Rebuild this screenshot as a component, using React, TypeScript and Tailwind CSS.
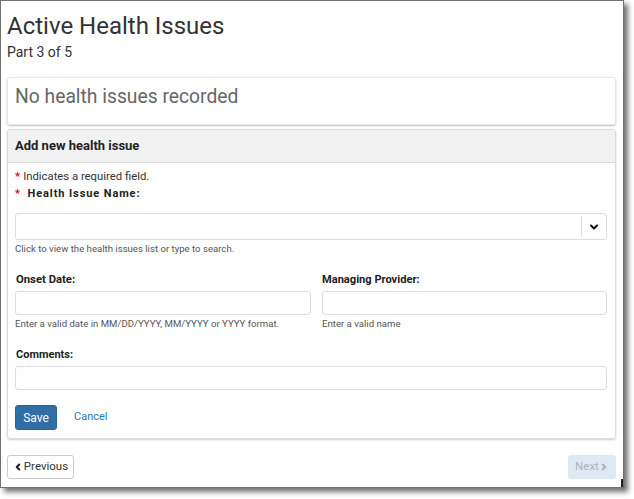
import { ChevronDown, ChevronLeft, ChevronRight } from "lucide-react"

const font = { fontFamily: "Roboto, 'Liberation Sans', sans-serif" }

function Req() {
  return <span className="text-[#d0021b] font-bold mr-[3px]">*</span>
}

export default function App() {
  return (
    <div style={font} className="w-[634px] h-[499px] bg-white">
      <div className="relative w-[624px] h-[488px] border border-[#707070] bg-white shadow-[4px_4px_5px_rgba(0,0,0,0.55)] pl-[6px] pr-[7px] pt-[12px] text-[#333]">
        <h1 className="text-[24px] leading-[26px] font-normal">Active Health Issues</h1>
        <div className="text-[14px] leading-[20px] mt-[3px]">Part 3 of 5</div>

        <div className="mt-[15px] h-[48px] border border-[#e6e6e6] rounded-[3px] shadow-[0_1px_2px_rgba(0,0,0,0.25)] px-[7px] pt-[5px]">
          <div className="text-[19.3px] leading-[28px] text-[#666]">No health issues recorded</div>
        </div>

        <div className="mt-[4px] border border-[#dcdcdc] rounded-[3px] shadow-[0_1px_2px_rgba(0,0,0,0.2)]">
          <div className="h-[33px] bg-[#f2f2f2] border-b border-[#dcdcdc] px-[7px] pt-[7px] text-[13px] leading-[18px] font-bold text-[#222]">
            Add new health issue
          </div>
          <div className="pl-[7px] pr-[8px] pt-[6px] pb-[8px]">
            <div className="text-[11.3px] leading-[16px] text-[#333]">
              <Req />Indicates a required field.
            </div>
            <div className="mt-[1px] text-[11px] leading-[16px] font-bold text-[#222] tracking-[0.9px]">
              <Req /> Health Issue Name:
            </div>
            <div className="mt-[11px] h-[27px] border border-[#dedede] rounded-[3px] flex">
              <div className="flex-1" />
              <div className="w-[25px] flex items-center justify-center border-l border-[#dedede] my-[2px]">
                <ChevronDown size={12} strokeWidth={4} className="text-[#111]" />
              </div>
            </div>
            <div className="mt-[2px] text-[9.6px] leading-[14px] text-[#555]">
              Click to view the health issues list or type to search.
            </div>

            <div className="mt-[16px] grid grid-cols-[296px_1fr] gap-x-[11px]">
              <div>
                <div className="text-[11.3px] leading-[16px] font-bold text-[#222] pl-[1px]">Onset Date:</div>
                <div className="mt-[3px] h-[24px] border border-[#dedede] rounded-[3px]" />
                <div className="mt-[2px] text-[9.6px] leading-[14px] text-[#555]">
                  Enter a valid date in MM/DD/YYYY, MM/YYYY or YYYY format.
                </div>
              </div>
              <div>
                <div className="text-[11.1px] leading-[16px] font-bold text-[#222]">Managing Provider:</div>
                <div className="mt-[3px] h-[24px] border border-[#dedede] rounded-[3px]" />
                <div className="mt-[2px] text-[9.6px] leading-[14px] text-[#555]">Enter a valid name</div>
              </div>
            </div>

            <div className="mt-[16px] text-[11px] leading-[16px] font-bold text-[#222] pl-[1px]">Comments:</div>
            <div className="mt-[3px] h-[24px] border border-[#dedede] rounded-[3px]" />

            <div className="mt-[15px] flex items-center gap-[17px]">
              <button className="h-[25px] w-[42px] rounded-[3px] bg-[#2f6fa6] border border-[#2a6496] text-white text-[12px]">
                Save
              </button>
              <span className="text-[11px] text-[#2a7ab8]">Cancel</span>
            </div>
          </div>
        </div>

        <div className="mt-[16px] flex justify-between">
          <button className="h-[24px] w-[67px] border border-[#ccc] rounded-[3px] bg-white flex items-center justify-center gap-[1px] text-[11.5px] text-[#333]">
            <ChevronLeft size={10} strokeWidth={5} className="text-[#222]" />
            Previous
          </button>
          <button className="h-[24px] w-[48px] rounded-[3px] bg-[#dfe9f2] flex items-center justify-center text-[11.5px] text-[#aab4be]">
            Next
            <ChevronRight size={10} strokeWidth={5} />
          </button>
        </div>

        <div className="absolute right-[0px] bottom-[0px] w-[2px] h-[8px] bg-[#222]" />
      </div>
    </div>
  )
}
